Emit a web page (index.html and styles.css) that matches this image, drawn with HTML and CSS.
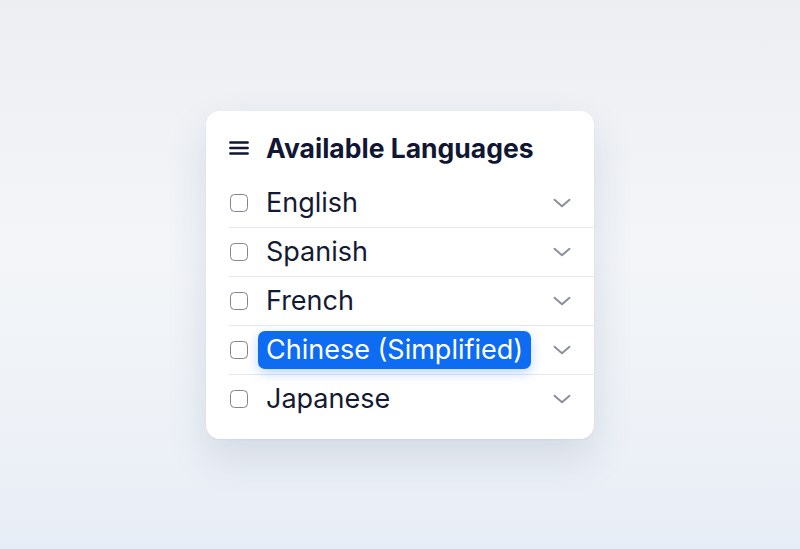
FILE: index.html
```html
<!DOCTYPE html>
<html lang="en">
<head>
<meta charset="utf-8">
<title>Available Languages</title>
<link rel="stylesheet" href="styles.css">
</head>
<body>
<main class="stage">
  <section class="card">
    <header class="card-header">
      <span class="lead">
        <svg class="menu-icon" width="20" height="14" viewBox="0 0 20 14" aria-hidden="true">
          <path d="M1.4 1.5h17.2M1.4 7h17.2M1.4 12.5h17.2" stroke="#111733" stroke-width="2.6" stroke-linecap="round" fill="none"/>
        </svg>
      </span>
      <h1 class="title">Available Languages</h1>
    </header>
    <ul class="lang-list">
      <li class="lang-row">
        <span class="lead"><span class="checkbox"></span></span>
        <span class="lang-name">English</span>
        <svg class="chevron" width="18" height="10" viewBox="0 0 18 10" aria-hidden="true"><path d="M1.5 1.8 9 8.2l7.5-6.4"/></svg>
      </li>
      <li class="lang-row">
        <span class="lead"><span class="checkbox"></span></span>
        <span class="lang-name">Spanish</span>
        <svg class="chevron" width="18" height="10" viewBox="0 0 18 10" aria-hidden="true"><path d="M1.5 1.8 9 8.2l7.5-6.4"/></svg>
      </li>
      <li class="lang-row">
        <span class="lead"><span class="checkbox"></span></span>
        <span class="lang-name">French</span>
        <svg class="chevron" width="18" height="10" viewBox="0 0 18 10" aria-hidden="true"><path d="M1.5 1.8 9 8.2l7.5-6.4"/></svg>
      </li>
      <li class="lang-row">
        <span class="lead"><span class="checkbox"></span></span>
        <span class="lang-name is-selected">Chinese (Simplified)</span>
        <svg class="chevron" width="18" height="10" viewBox="0 0 18 10" aria-hidden="true"><path d="M1.5 1.8 9 8.2l7.5-6.4"/></svg>
      </li>
      <li class="lang-row">
        <span class="lead"><span class="checkbox"></span></span>
        <span class="lang-name">Japanese</span>
        <svg class="chevron" width="18" height="10" viewBox="0 0 18 10" aria-hidden="true"><path d="M1.5 1.8 9 8.2l7.5-6.4"/></svg>
      </li>
    </ul>
  </section>
</main>
</body>
</html>
```
FILE: styles.css
```css
* { box-sizing: border-box; }

html, body {
  margin: 0;
  height: 100%;
}

body {
  font-family: Inter, "Noto Sans", "Liberation Sans", sans-serif;
  color: #121833;
  background: linear-gradient(180deg, #eceef2 0%, #f3f5f8 45%, #eef2f7 75%, #e7edf6 100%);
}

.stage {
  height: 549px;
  display: flex;
  align-items: center;
  justify-content: center;
}

.card {
  width: 388px;
  height: 328px;
  background: #ffffff;
  border-radius: 14px;
  padding: 20px 0 15px 23px;
  box-shadow:
    0 1px 2px rgba(40, 55, 90, 0.06),
    0 18px 40px rgba(40, 60, 100, 0.13);
}

.card-header {
  display: flex;
  align-items: center;
  gap: 17px;
  height: 34px;
  margin-bottom: 14px;
}

.lead {
  width: 20px;
  flex: none;
  display: flex;
  align-items: center;
  justify-content: center;
}

.menu-icon { display: block; }

.title {
  margin: 0;
  font-size: 26.5px;
  font-weight: 700;
  letter-spacing: 0;
  line-height: 34px;
  color: #111733;
}

.lang-list {
  list-style: none;
  margin: 0;
  padding: 0;
}

.lang-row {
  display: flex;
  align-items: center;
  gap: 17px;
  height: 49px;
  padding-right: 23px;
  border-bottom: 1px solid #e6e8ec;
}

.lang-row:last-child { border-bottom: none; }

.checkbox {
  width: 18px;
  height: 18px;
  border: 1.6px solid #80858f;
  border-radius: 4.5px;
  background: #fff;
}

.lang-name {
  flex: 1;
  font-size: 27px;
  font-weight: 400;
  letter-spacing: 0;
  line-height: 34px;
  color: #141a33;
}

.lang-name.is-selected {
  flex: none;
  margin-left: -8px;
  margin-right: auto;
  padding: 2px 8px;
  border-radius: 7px;
  background: #0d6cf1;
  color: #ffffff;
  box-shadow: 0 4px 12px rgba(20, 110, 240, 0.28);
}

.chevron {
  flex: none;
  display: block;
}

.chevron path {
  fill: none;
  stroke: #8a8f99;
  stroke-width: 2;
  stroke-linecap: round;
  stroke-linejoin: round;
}
```
